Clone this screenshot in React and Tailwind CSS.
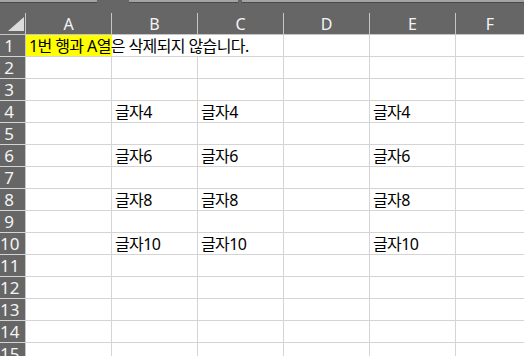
const columns = ['A', 'B', 'C', 'D', 'E', 'F'];
const rowCount = 15;

const cellData = {
  4: { B: '글자4', C: '글자4', E: '글자4' },
  6: { B: '글자6', C: '글자6', E: '글자6' },
  8: { B: '글자8', C: '글자8', E: '글자8' },
  10: { B: '글자10', C: '글자10', E: '글자10' },
};

const TopStrip = () => (
  <div className="flex h-[4px] bg-[#666666]">
    <div className="w-[97px] h-[3px] bg-[#a3a3a3] border-b border-[#4a4a4a]" />
    <div className="w-[32px]" />
    <div className="w-[109px] h-[3px] bg-[#a3a3a3] border-b border-[#4a4a4a]" />
    <div className="w-[4px]" />
    <div className="flex-1 h-[3px] bg-[#a3a3a3] border-b border-[#4a4a4a]" />
  </div>
);

const HeaderRow = () => (
  <div className="flex h-[31px] bg-[#666666] border-b border-[#c6c6c6]">
    <div className="w-[26px] shrink-0 flex items-end">
      <div className="relative w-full h-[21px] border-r border-[#c6c6c6]">
        <svg className="absolute left-[8px] top-[4px]" width="17" height="14" viewBox="0 0 17 14">
          <polygon points="16,0 16,14 0,14" fill="#dcdcdc" />
        </svg>
      </div>
    </div>
    {columns.map((col) => (
      <div key={col} className={`${col === 'F' ? 'flex-1' : 'w-[86px]'} shrink-0 flex items-end`}>
        <div className={`w-full h-[21px] flex items-center justify-center text-[16px] tracking-normal text-[#f4f4f4] ${col === 'F' ? '' : 'border-r border-[#c6c6c6]'}`}>
          {col}
        </div>
      </div>
    ))}
  </div>
);

const Cell = ({ children, last, noBorder, className = '' }) => (
  <div
    className={`${last ? 'flex-1' : 'w-[86px]'} shrink-0 h-full flex items-center pl-[3px] pt-[1px] ${
      last || noBorder ? '' : 'border-r border-[#d4d4d4]'
    } ${className}`}
  >
    {children}
  </div>
);

const Row = ({ n }) => {
  const data = cellData[n] || {};
  return (
    <div className="flex h-[22px] border-b border-[#d4d4d4]">
      <div className="w-[26px] shrink-0 h-full bg-[#666666] border-r border-[#c6c6c6] flex items-center">
        <span className="w-[18px] text-center text-[17px] tracking-normal text-[#f4f4f4]">{n}</span>
      </div>
      {n === 1 ? (
        <>
          <Cell noBorder className="bg-[#ffff00] relative z-10">
            <span className="whitespace-nowrap">1번 행과 A열은 삭제되지 않습니다.</span>
          </Cell>
          <Cell noBorder />
          <Cell />
          <Cell />
          <Cell />
          <Cell last />
        </>
      ) : (
        columns.map((col) => (
          <Cell key={col} last={col === 'F'}>
            {data[col] && <span className="whitespace-nowrap">{data[col]}</span>}
          </Cell>
        ))
      )}
    </div>
  );
};

export default function App() {
  return (
    <div className="w-[524px] h-[356px] overflow-hidden bg-white font-['Noto_Sans','Noto_Sans_CJK_KR',sans-serif] text-[16px] tracking-[-0.6px] text-black leading-none">
      <TopStrip />
      <HeaderRow />
      {Array.from({ length: rowCount }, (_, i) => (
        <Row key={i + 1} n={i + 1} />
      ))}
    </div>
  );
}
